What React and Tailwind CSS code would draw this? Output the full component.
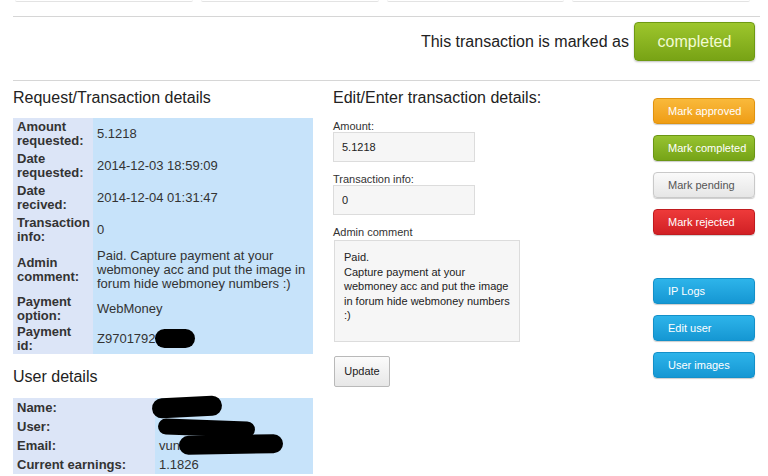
import React from "react";

const requestRows = [
  { label: ["Amount", "requested:"], value: "5.1218", h: "h-[32px]" },
  { label: ["Date", "requested:"], value: "2014-12-03 18:59:09", h: "h-[32px]" },
  { label: ["Date", "recived:"], value: "2014-12-04 01:31:47", h: "h-[32px]" },
  { label: ["Transaction", "info:"], value: "0", h: "h-[32px]" },
  {
    label: ["Admin", "comment:"],
    value: ["Paid. Capture payment at your", "webmoney acc and put the image in", "forum hide webmoney numbers :)"],
    h: "h-[48px]",
  },
  { label: ["Payment", "option:"], value: "WebMoney", h: "h-[30px]" },
  { label: ["Payment", "id:"], value: "Z9701792", h: "h-[30px]" },
];

const userRows = [
  { label: "Name:", value: "" },
  { label: "User:", value: "" },
  { label: "Email:", value: "vun" },
  { label: "Current earnings:", value: "1.1826" },
];

const sideButtons = [
  { text: "Mark approved", cls: "from-[#f9b93a] to-[#ef9d12] border-[#e0930e] text-white" },
  { text: "Mark completed", cls: "from-[#97c330] to-[#76a417] border-[#6b9614] text-white" },
  { text: "Mark pending", cls: "from-[#fafafa] to-[#e6e6e6] border-[#c9c9c9] text-[#555]" },
  { text: "Mark rejected", cls: "from-[#ee3a3a] to-[#d11f24] border-[#c01b1f] text-white" },
];

const userButtons = ["IP Logs", "Edit user", "User images"];

const Blob = ({ className }) => <div className={`absolute bg-black ${className}`} />;

const App = () => {
  return (
    <div className="w-[768px] h-[476px] overflow-hidden bg-white font-['Liberation_Sans',Arial,sans-serif] text-[#333]">
      {/* remnants of the tab boxes above */}
      <div className="grid grid-cols-4 gap-[8px] pl-[15px] pr-[18px] h-[2px]">
        <div className="h-[2px] border-b border-[#e3e3e3] rounded-b-[2px]" />
        <div className="h-[2px] border-b border-[#e3e3e3] rounded-b-[2px]" />
        <div className="h-[2px] border-b border-[#e3e3e3] rounded-b-[2px]" />
        <div className="h-[2px] border-b border-[#e3e3e3] rounded-b-[2px]" />
      </div>

      <div className="mt-[14px] ml-[13px] mr-[8px] border-t border-[#d6d6d6]" />

      <div className="flex justify-end items-center pt-[5px] pb-[19px] pr-[13px]">
        <span className="text-[16px] text-[#222] mr-[5px]">This transaction is marked as</span>
        <div className="w-[121px] h-[39px] flex items-center justify-center rounded-[4px] border border-[#6e9a12] bg-linear-to-b from-[#9dc62c] to-[#78a315] shadow-[0_1px_2px_rgba(0,0,0,0.25)] text-[16px] text-[#f2fbd2]">
          completed
        </div>
      </div>

      <div className="ml-[13px] mr-[8px] border-t border-[#d6d6d6]" />

      <div className="flex pl-[13px]">
        {/* left column */}
        <div className="w-[300px]">
          <h2 className="mt-[8px] text-[16px] leading-[18px] text-[#222]">Request/Transaction details</h2>
          <div className="relative mt-[11px]">
            {requestRows.map((r, i) => (
              <div key={i} className={`flex ${r.h}`}>
                <div className="w-[80px] bg-[#dce5f7] pl-[4px] flex flex-col justify-center font-bold text-[13px] leading-[14px] text-[#333]">
                  <span>{r.label[0]}</span>
                  <span>{r.label[1]}</span>
                </div>
                <div className="flex-1 bg-[#c7e3fa] pl-[4px] flex flex-col justify-center text-[13px] leading-[14px] text-[#333]">
                  {Array.isArray(r.value) ? r.value.map((l, j) => <span key={j}>{l}</span>) : <span>{r.value}</span>}
                </div>
              </div>
            ))}
            <Blob className="left-[142px] top-[211px] w-[40px] h-[19px] rounded-[10px]" />
          </div>

          <h2 className="mt-[14px] text-[16px] leading-[18px] text-[#222]">User details</h2>
          <div className="relative mt-[12px]">
            {userRows.map((r, i) => (
              <div key={i} className="flex h-[19px]">
                <div className="w-[142px] bg-[#dce5f7] pl-[4px] flex items-center font-bold text-[13px] text-[#333]">{r.label}</div>
                <div className="flex-1 bg-[#c7e3fa] pl-[4px] flex items-center text-[13px] text-[#333]">{r.value}</div>
              </div>
            ))}
            <Blob className="left-[139px] top-[-1px] w-[70px] h-[20px] rounded-[12px] -rotate-[3deg]" />
            <Blob className="left-[145px] top-[22px] w-[97px] h-[16px] rounded-[9px] rotate-[2deg]" />
            <Blob className="left-[166px] top-[37px] w-[104px] h-[19px] rounded-[10px] -rotate-[1deg]" />
          </div>
        </div>

        {/* middle column */}
        <div className="w-[340px] pl-[20px]">
          <h2 className="mt-[8px] text-[16px] leading-[18px] text-[#222]">Edit/Enter transaction details:</h2>

          <div className="mt-[13px] text-[11px] leading-[12px] text-[#333]">Amount:</div>
          <input
            readOnly
            value="5.1218"
            className="block w-[142px] h-[30px] bg-[#f6f6f6] border border-[#dcdcdc] pl-[8px] text-[11px] text-[#222] outline-none"
          />

          <div className="mt-[11px] text-[11px] leading-[12px] text-[#333]">Transaction info:</div>
          <input
            readOnly
            value="0"
            className="block w-[142px] h-[30px] bg-[#f6f6f6] border border-[#dcdcdc] pl-[8px] text-[11px] text-[#222] outline-none"
          />

          <div className="mt-[11px] text-[11px] leading-[12px] text-[#333]">Admin comment</div>
          <textarea
            readOnly
            value={"Paid.\nCapture payment at your\nwebmoney acc and put the image\nin forum hide webmoney numbers\n:)"}
            className="block mt-[2px] ml-[1px] w-[186px] h-[102px] resize-none bg-[#f6f6f6] border border-[#dcdcdc] pl-[9px] pr-[3px] pt-[9px] text-[11px] leading-[14.5px] text-[#222] outline-none overflow-hidden"
          />

          <button className="block mt-[14px] ml-[1px] w-[56px] h-[31px] rounded-[2px] border border-[#b9b9b9] bg-linear-to-b from-[#fbfbfb] to-[#e7e7e7] text-[11px] text-[#222]">
            Update
          </button>
        </div>

        {/* right column */}
        <div className="w-[102px] pt-[17px]">
          <div className="flex flex-col gap-[11px]">
            {sideButtons.map((b) => (
              <div
                key={b.text}
                className={`h-[26px] flex items-center pl-[14px] rounded-[4px] border bg-linear-to-b shadow-[0_1px_1px_rgba(0,0,0,0.2)] text-[11px] ${b.cls}`}
              >
                {b.text}
              </div>
            ))}
          </div>
          <div className="flex flex-col gap-[11px] mt-[43px]">
            {userButtons.map((t) => (
              <div
                key={t}
                className="h-[26px] flex items-center pl-[14px] rounded-[4px] border border-[#1390c9] bg-linear-to-b from-[#2db4ea] to-[#1597d3] shadow-[0_1px_1px_rgba(0,0,0,0.2)] text-[11px] text-white"
              >
                {t}
              </div>
            ))}
          </div>
        </div>
      </div>
    </div>
  );
};

export default App;
